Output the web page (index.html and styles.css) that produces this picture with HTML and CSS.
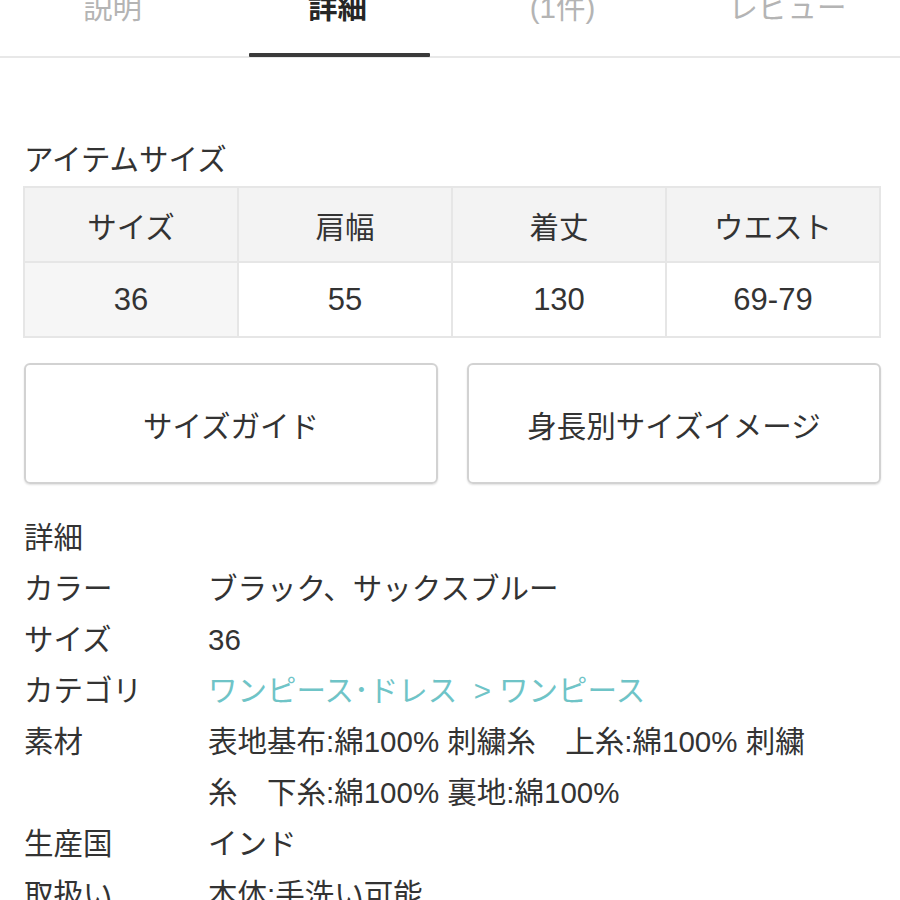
FILE: index.html
```html
<!DOCTYPE html>
<html lang="ja">
<head>
<meta charset="utf-8">
<title>詳細</title>
<link rel="stylesheet" href="styles.css">
</head>
<body>
<nav class="tabs">
  <div class="tab"><span class="tab-label">説明</span></div>
  <div class="tab active"><span class="tab-label">詳細</span></div>
  <div class="tab"><span class="tab-label">(1件)</span></div>
  <div class="tab"><span class="tab-label">レビュー</span></div>
</nav>
<main class="content">
  <h2 class="section-title">アイテムサイズ</h2>
  <table class="size-table">
    <tr><th>サイズ</th><th>肩幅</th><th>着丈</th><th>ウエスト</th></tr>
    <tr><td class="first">36</td><td>55</td><td>130</td><td>69-79</td></tr>
  </table>
  <div class="buttons">
    <div class="btn">サイズガイド</div>
    <div class="btn">身長別サイズイメージ</div>
  </div>
  <section class="details">
    <div class="details-title">詳細</div>
    <dl class="spec">
      <dt>カラー</dt><dd>ブラック、サックスブルー</dd>
      <dt>サイズ</dt><dd>36</dd>
      <dt>カテゴリ</dt><dd><span class="link">ワンピース･ドレス</span>&nbsp; <span class="link">&gt; ワンピース</span></dd>
      <dt>素材</dt><dd><span class="line">表地基布:綿100% 刺繍糸　上糸:綿100% 刺繍</span><span class="line">糸　下糸:綿100% 裏地:綿100%</span></dd>
      <dt>生産国</dt><dd>インド</dd>
      <dt>取扱い</dt><dd>本体:手洗い可能</dd>
    </dl>
  </section>
</main>
</body>
</html>
```

FILE: styles.css
```css
html, body {
  margin: 0;
  padding: 0;
  background: #ffffff;
}
body {
  font-family: "Liberation Sans", "Noto Sans CJK JP", sans-serif;
  color: #333333;
  font-size: 29.5px;
  overflow: hidden;
}
.tabs {
  display: grid;
  grid-template-columns: repeat(4, 1fr);
  height: 56px;
  border-bottom: 2px solid #e8e8e8;
}
.tab {
  display: flex;
  flex-direction: column;
  align-items: center;
  justify-content: space-between;
  color: #b4b4b4;
}
.tab-label {
  line-height: 28px;
  margin-top: -6px;
}
.tab.active {
  color: #262626;
  font-weight: bold;
  align-items: stretch;
  text-align: center;
}
.tab.active::after {
  content: "";
  display: block;
  height: 4px;
  margin: 0 20px -1px 24px;
  background: #3a3a3a;
  border-radius: 1px;
}
.content {
  padding: 0 19px 0 23px;
}
.section-title {
  margin: 76px 0 0 1px;
  font-size: 29.5px;
  font-weight: normal;
  line-height: 51px;
  color: #333;
}
.size-table {
  width: 100%;
  margin-top: 1px;
  border-collapse: collapse;
  table-layout: fixed;
}
.size-table th,
.size-table td {
  border: 2px solid #e6e6e6;
  height: 73px;
  padding: 0;
  text-align: center;
  font-weight: normal;
  font-size: 29.5px;
  color: #333;
}
.size-table td {
  font-size: 31px;
}
.size-table th {
  background: #f3f3f3;
}
.size-table td.first {
  background: #f6f6f6;
}
.buttons {
  display: grid;
  grid-template-columns: 1fr 1fr;
  gap: 29px;
  margin-top: 25px;
  padding-left: 1px;
}
.btn {
  height: 117px;
  border: 2px solid #d2d2d2;
  border-radius: 6px;
  box-shadow: 0 1px 2px rgba(0, 0, 0, 0.12);
  display: flex;
  align-items: center;
  justify-content: center;
  color: #333;
}
.details {
  margin-top: 28px;
  padding-left: 1px;
  line-height: 51px;
}
.spec {
  margin: 0;
  display: grid;
  grid-template-columns: 184px 1fr;
}
.spec dt, .spec dd {
  margin: 0;
}
.spec dd .line {
  display: block;
  white-space: nowrap;
}
.link {
  color: #6fc4c7;
}
```
